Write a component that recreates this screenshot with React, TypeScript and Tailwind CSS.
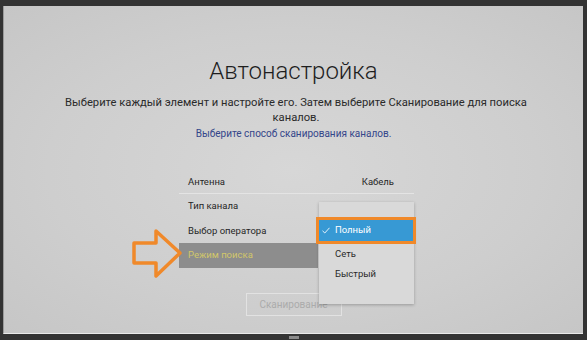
import React from 'react';

const rows = ['Тип канала', 'Выбор оператора'];

const options = ['Полный', 'Сеть', 'Быстрый'];

const App: React.FC = () => {
  return (
    <div className="relative w-[587px] h-[340px] bg-[#333333] flex flex-col pt-[6px] pl-[3px] pr-[4px] pb-[6px] font-['Roboto','Liberation_Sans',sans-serif]">
      <div className="relative flex-1 flex flex-col items-center bg-[radial-gradient(ellipse_at_center,#d7d7d7_0%,#cecece_60%,#c6c6c6_100%)] border-l border-[#9a9a9a] border-b border-b-[#e9e9e9]">
        <h1 className="mt-[50px] h-[30px] leading-[30px] text-[24px] font-light text-[#1e1e1e]">Автонастройка</h1>
        <p className="mt-[9px] ml-[5px] w-[470px] text-center text-[11.2px] leading-[15px] text-[#2a2a2a]">
          Выберите каждый элемент и настройте его. Затем выберите Сканирование для поиска каналов.
        </p>
        <p className="mt-[2px] h-[14px] leading-[14px] text-[10px] text-[#34468a]">Выберите способ сканирования каналов.</p>

        <div className="mt-[30px] self-start ml-[175px] w-[235px] text-[9.5px] text-[#262626]">
          <div className="h-[23px] flex items-center justify-between pl-[9px] pr-[20px] border-b border-[#e4e4e4]">
            <span>Антенна</span>
            <span>Кабель</span>
          </div>
          <div className="h-[25px] flex items-center pl-[9px]">{rows[0]}</div>
          <div className="h-[24px] flex items-center pl-[9px]">{rows[1]}</div>
          <div className="h-[25px] w-[139px] flex items-center pl-[9px] bg-[#8d8d8d] text-[#d2c76a]">Режим поиска</div>
        </div>

        <div className="mt-[25px] w-[96px] h-[23px] flex items-center justify-center border border-[#e2e2e2] text-[10px] text-[#ababab]">
          Сканирование
        </div>

        <svg className="absolute left-[127px] top-[222px]" width="56" height="52" viewBox="0 0 56 52">
          <path
            d="M3 15 L25 15 L25 3 L49 25 L25 48 L25 35 L3 35 Z"
            fill="none"
            stroke="#f0892a"
            strokeWidth="3.5"
            strokeLinejoin="round"
          />
        </svg>

        <div className="absolute left-[315px] top-[196px] w-[95px] h-[102px] bg-[#d9d9d9] shadow-[0_1px_3px_rgba(0,0,0,0.25)] pt-[15px] text-[9.5px] text-[#2a2a2a]">
          <div className="-ml-[3px] w-[100px] h-[27px] border-[3px] border-[#f0892a] bg-[#3799d4] flex items-center text-white">
            <svg className="ml-[3px] mr-[5px]" width="8" height="7" viewBox="0 0 8 7">
              <path d="M0.5 3.8 L2.8 6 L7.5 0.8" fill="none" stroke="#e8f2fa" strokeWidth="1" />
            </svg>
            <span>{options[0]}</span>
          </div>
          <div className="h-[18px] mt-[1px] flex items-center pl-[16px]">{options[1]}</div>
          <div className="h-[22px] flex items-center pl-[16px]">{options[2]}</div>
        </div>
      </div>
      <div className="absolute left-[289px] top-[336px] w-[10px] h-[3px] bg-[#8a8a8a]" />
    </div>
  );
};

export default App;
